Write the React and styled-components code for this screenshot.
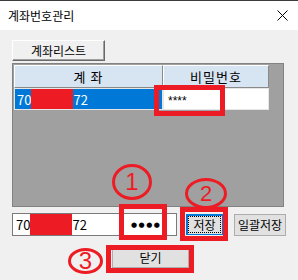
import styled, { createGlobalStyle } from 'styled-components';

const GlobalStyle = createGlobalStyle`
    html, body {
        margin: 0;
        padding: 0;
        background: #f0f0f0;
    }
    body {
        font-family: "Noto Sans CJK KR", "Noto Sans", sans-serif;
        font-size: 12px;
        color: #000;
    }
`

const Window = styled.div`
    position: relative;
    width: 298px;
    height: 280px;
    background: #f0f0f0;
    border-top: 1px solid #3c3c3c;
    box-sizing: border-box;
    overflow: hidden;
`
const TitleBar = styled.div`
    display: flex;
    align-items: center;
    justify-content: space-between;
    height: 29px;
    padding: 0 10px 0 8px;
    background: #fff;
`
const Title = styled.span`
    font-size: 12px;
    line-height: 1;
    margin-top: 1px;
`
const Body = styled.div`
    display: flex;
    flex-direction: column;
    align-items: flex-start;
    padding: 10px 12px 0 12px;
`
const Button = styled.button`
    display: flex;
    align-items: center;
    justify-content: center;
    padding: 0;
    box-sizing: border-box;
    width: ${p => p.w}px;
    height: ${p => p.h || 21}px;
    margin-left: ${p => p.ml || 0}px;
    font-family: inherit;
    font-size: 12px;
    line-height: 1;
    color: #000;
    background: #e1e1e1;
    border: 1px solid #adadad;
`
const ListButton = styled(Button)`
    background: #f0f0f0;
    border: 1px solid;
    border-color: #fff #696969 #696969 #fff;
    box-shadow: inset -1px -1px 0 #a0a0a0;
`
const FocusButton = styled(Button)`
    border: 1px solid #0078d7;
    box-shadow: inset 1px 1px 0 #0078d7;
    outline: 1px dotted #000;
    outline-offset: -3px;
`
const Grid = styled.div`
    margin-top: 2px;
    width: 272px;
    height: 144px;
    box-sizing: border-box;
    border: 1px solid #828282;
    padding: 1px;
    background: #a0a0a0;
`
const Row = styled.div`
    display: flex;
    height: ${p => p.h}px;
`
const HeaderCell = styled.div`
    display: flex;
    align-items: center;
    justify-content: center;
    box-sizing: border-box;
    width: ${p => p.w}px;
    background: #d7e4f2;
    border-top: 1px solid #fff;
    border-left: 1px solid #fff;
    border-right: 1px solid #8a8a8a;
    border-bottom: 1px solid #8a8a8a;
    font-size: 13px;
    letter-spacing: 1px;
`
const Cell = styled.div`
    display: flex;
    align-items: center;
    box-sizing: border-box;
    width: ${p => p.w}px;
    padding-left: ${p => p.pl || 2}px;
    border: 1px solid #e6e6e6;
    background: ${p => (p.selected ? '#0078d7' : '#fff')};
    color: ${p => (p.selected ? '#fff' : '#000')};
    font-size: 13px;
`
const Redact = styled.span`
    display: inline-block;
    align-self: stretch;
    width: ${p => p.w}px;
    background: #ed1c24;
`
const Stars = styled.span`
    font-family: "Liberation Sans", Arial, sans-serif;
    font-size: 12px;
    margin-top: 3px;
`
const InputRow = styled.div`
    display: flex;
    align-items: flex-start;
    margin-top: 6px;
`
const TextBox = styled.div`
    display: flex;
    align-items: center;
    box-sizing: border-box;
    width: ${p => p.w}px;
    height: 23px;
    margin-left: ${p => p.ml || 0}px;
    padding-left: ${p => p.pl || 3}px;
    background: #fff;
    border: 1px solid #7a7a7a;
    font-size: 13px;
`
const Dots = styled.span`
    font-family: "DejaVu Sans", sans-serif;
    font-size: 7px;
    letter-spacing: 1.5px;
`
const CloseRow = styled.div`
    display: flex;
    margin-top: 12px;
    padding-left: 100px;
`

/* red marks drawn over the screenshot */
const MarkBox = styled.div`
    position: absolute;
    box-sizing: border-box;
    border: 5px solid #ed1c24;
`
const MarkCircle = styled.div`
    position: absolute;
    box-sizing: border-box;
    border: 3px solid #ed1c24;
    border-radius: 50%;
    display: flex;
    align-items: center;
    justify-content: center;
    color: #ed1c24;
    font-family: "Liberation Sans", Arial, sans-serif;
    font-size: ${p => p.fs || 24}px;
    line-height: 1;
`

const marks = [
    { x: 154, y: 84, w: 71, h: 31 },
    { x: 119, y: 203, w: 48, h: 36 },
    { x: 180, y: 206, w: 48, h: 34 },
    { x: 106, y: 244, w: 88, h: 28 },
]

const circles = [
    { n: '1', x: 112, y: 163, w: 40, h: 36, fs: 24 },
    { n: '2', x: 185, y: 177, w: 42, h: 31, fs: 22 },
    { n: '3', x: 68, y: 247, w: 35, h: 26, fs: 24 },
]

const CloseIcon = () => (
    <svg width="11" height="11" viewBox="0 0 11 11">
        <path d="M0.5 0.5 L10.5 10.5 M10.5 0.5 L0.5 10.5" stroke="#000" strokeWidth="1" fill="none" />
    </svg>
)

const App = () => {
    return (
        <>
            <GlobalStyle />
            <Window>
                <TitleBar>
                    <Title>계좌번호관리</Title>
                    <CloseIcon />
                </TitleBar>
                <Body>
                    <ListButton w={93} h={21}>계좌리스트</ListButton>
                    <Grid>
                        <Row h={23}>
                            <HeaderCell w={149}>계 좌</HeaderCell>
                            <HeaderCell w={106}>비밀번호</HeaderCell>
                        </Row>
                        <Row h={22}>
                            <Cell selected w={149}>
                                70<Redact w={42} />72
                            </Cell>
                            <Cell w={106} pl={4}>
                                <Stars>****</Stars>
                            </Cell>
                        </Row>
                    </Grid>
                    <InputRow>
                        <TextBox w={108}>
                            70<Redact w={42} />72
                        </TextBox>
                        <TextBox w={56} pl={9} ml={1}>
                            <Dots>●●●●</Dots>
                        </TextBox>
                        <FocusButton w={37} h={21} ml={9} style={{ marginTop: 1 }}>저장</FocusButton>
                        <Button w={52} h={22} ml={11} style={{ marginTop: 1 }}>일괄저장</Button>
                    </InputRow>
                    <CloseRow>
                        <Button w={77} h={20}>닫기</Button>
                    </CloseRow>
                </Body>
                {marks.map((m, i) => (
                    <MarkBox key={i} style={{ left: m.x, top: m.y, width: m.w, height: m.h }} />
                ))}
                {circles.map(c => (
                    <MarkCircle key={c.n} fs={c.fs} style={{ left: c.x, top: c.y, width: c.w, height: c.h }}>
                        {c.n}
                    </MarkCircle>
                ))}
            </Window>
        </>
    )
}

export default App
